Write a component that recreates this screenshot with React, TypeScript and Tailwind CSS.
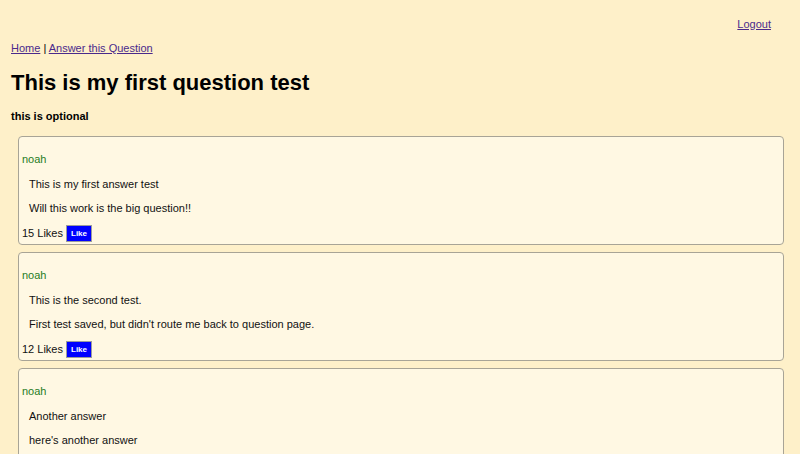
const answers = [
  {
    user: "noah",
    lines: ["This is my first answer test", "Will this work is the big question!!"],
    likes: 15,
  },
  {
    user: "noah",
    lines: ["This is the second test.", "First test saved, but didn't route me back to question page."],
    likes: 12,
  },
  {
    user: "noah",
    lines: ["Another answer", "here's another answer"],
    likes: 3,
  },
];

const AnswerCard = ({ user, lines, likes }: { user: string; lines: string[]; likes: number }) => {
  return (
    <div className="border border-[#a8a496] rounded-[4px] bg-[#fff8e3] pt-[16px] pb-[2px] pl-[3px] pr-[3px]">
      <div className="text-[#1f7d1f] leading-[13px]">{user}</div>
      <div className="pl-[7px]">
        <p className="leading-[13px] mt-[12px] text-[#111]">{lines[0]}</p>
        <p className="leading-[13px] mt-[11px] text-[#111]">{lines[1]}</p>
      </div>
      <div className="flex items-center mt-[10px]">
        <span className="leading-[13px] text-[#111]">{likes} Likes</span>
        <button className="ml-[3px] h-[17px] px-[4px] border border-[#9c9c9c] bg-[#0000ff] text-white text-[8px] font-bold leading-none">
          Like
        </button>
      </div>
    </div>
  );
};

export default function App() {
  return (
    <div className="min-h-screen bg-[#fef0c9] text-[11px] text-black font-['Liberation_Sans',Arial,sans-serif]">
      {/* top bar */}
      <div className="flex justify-end pt-[18px] pr-[29px]">
        <a href="#" className="underline text-[#4a2a8c] leading-[13px]">
          Logout
        </a>
      </div>

      <div className="px-[11px]">
        <div className="mt-[11px] leading-[13px]">
          <a href="#" className="underline text-[#4a2a8c]">
            Home
          </a>{" "}
          |{" "}
          <a href="#" className="underline text-[#4a2a8c]">
            Answer this Question
          </a>
        </div>
        <h1 className="mt-[15px] text-[22px] font-bold leading-[26px]">This is my first question test</h1>
        <p className="mt-[14px] font-bold leading-[13px]">this is optional</p>
      </div>

      <div className="mt-[13px] pl-[18px] pr-[16px] flex flex-col gap-[7px] pb-[20px]">
        {answers.map((a, i) => (
          <AnswerCard key={i} {...a} />
        ))}
      </div>
    </div>
  );
}
